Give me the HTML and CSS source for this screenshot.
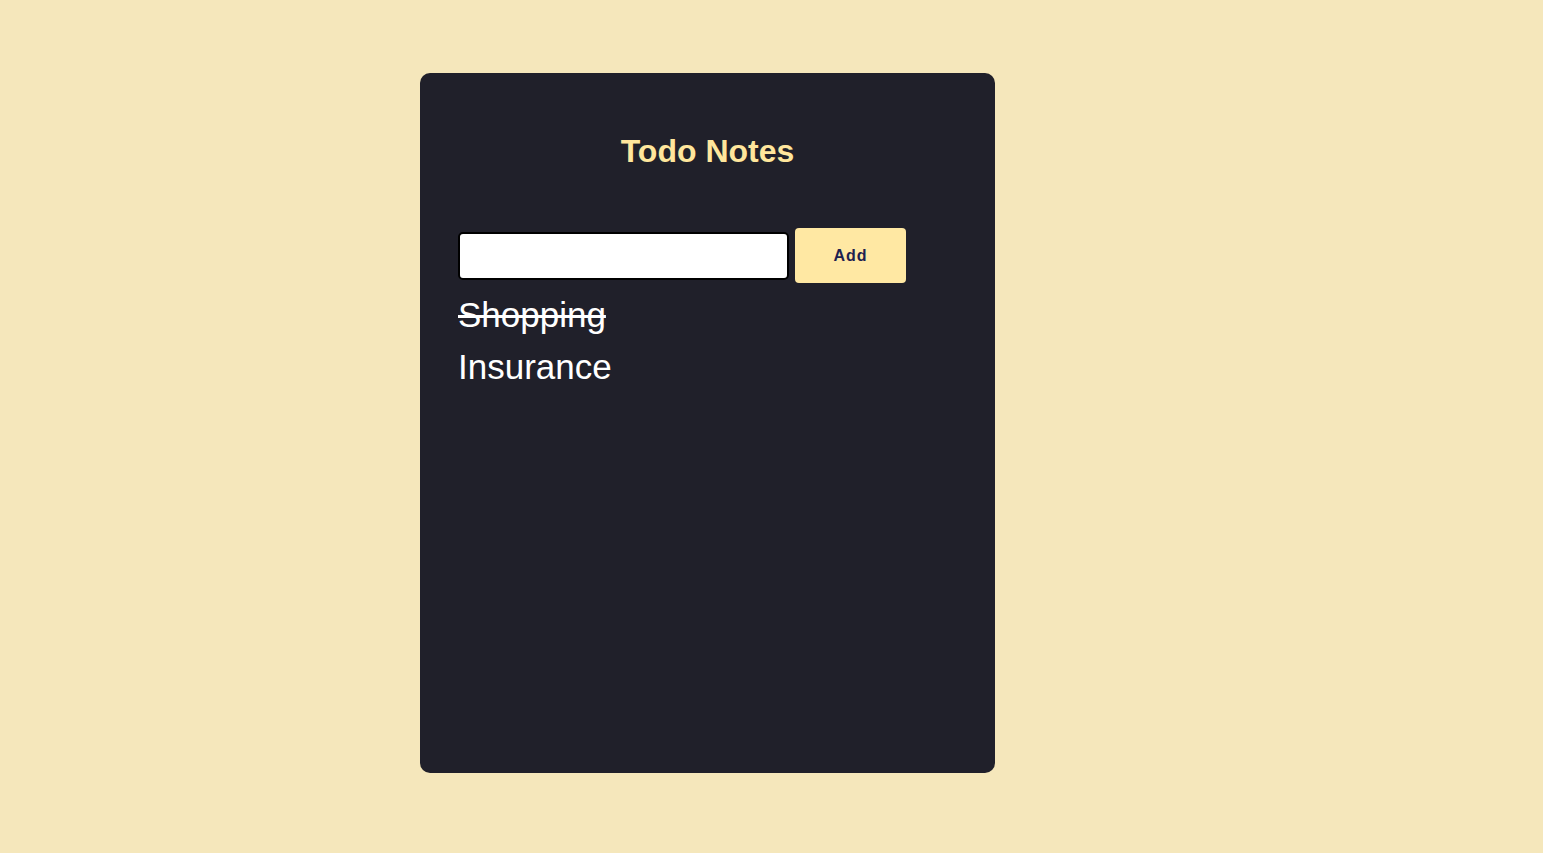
FILE: index.html
```html
<!DOCTYPE html>
<html>
<head>
<meta charset="utf-8">
<title>Todo Notes</title>
<link rel="stylesheet" href="styles.css">
</head>
<body>
<div class="page">
  <div class="card">
    <h1 class="title">Todo Notes</h1>
    <div class="form">
      <input class="field" type="text">
      <button class="add">Add</button>
    </div>
    <ul class="list">
      <li class="item done">Shopping</li>
      <li class="item">Insurance</li>
    </ul>
  </div>
</div>
</body>
</html>
```
FILE: styles.css
```css
html, body {
  margin: 0;
  padding: 0;
  background: #f5e7bb;
  font-family: "Liberation Sans", Arial, sans-serif;
}
.page {
  padding: 73px 0 0 420px;
  height: 780px;
}
.card {
  box-sizing: border-box;
  width: 575px;
  height: 700px;
  background: #20202a;
  border-radius: 10px;
  padding: 60px 38px 0 38px;
}
.title {
  margin: 0;
  text-align: center;
  color: #ffe69c;
  font-size: 32px;
  font-weight: bold;
  line-height: 36px;
}
.form {
  display: flex;
  align-items: center;
  gap: 6px;
  margin-top: 59px;
}
.field {
  box-sizing: border-box;
  width: 331px;
  height: 48px;
  border: 2px solid #000;
  border-radius: 5px;
  background: #fff;
  margin: 0;
  padding: 0 8px;
  outline: none;
}
.add {
  box-sizing: border-box;
  width: 111px;
  height: 55px;
  border: none;
  border-radius: 4px;
  background: #ffe8a3;
  color: #1e2250;
  font-family: "Liberation Sans", Arial, sans-serif;
  font-weight: bold;
  font-size: 16px;
  letter-spacing: 1px;
  margin: 0;
  padding: 0;
}
.list {
  list-style: none;
  margin: 6px 0 0 0;
  padding: 0;
}
.item {
  color: #fff;
  font-size: 35px;
  line-height: 52px;
}
.done {
  text-decoration: line-through;
}
```
